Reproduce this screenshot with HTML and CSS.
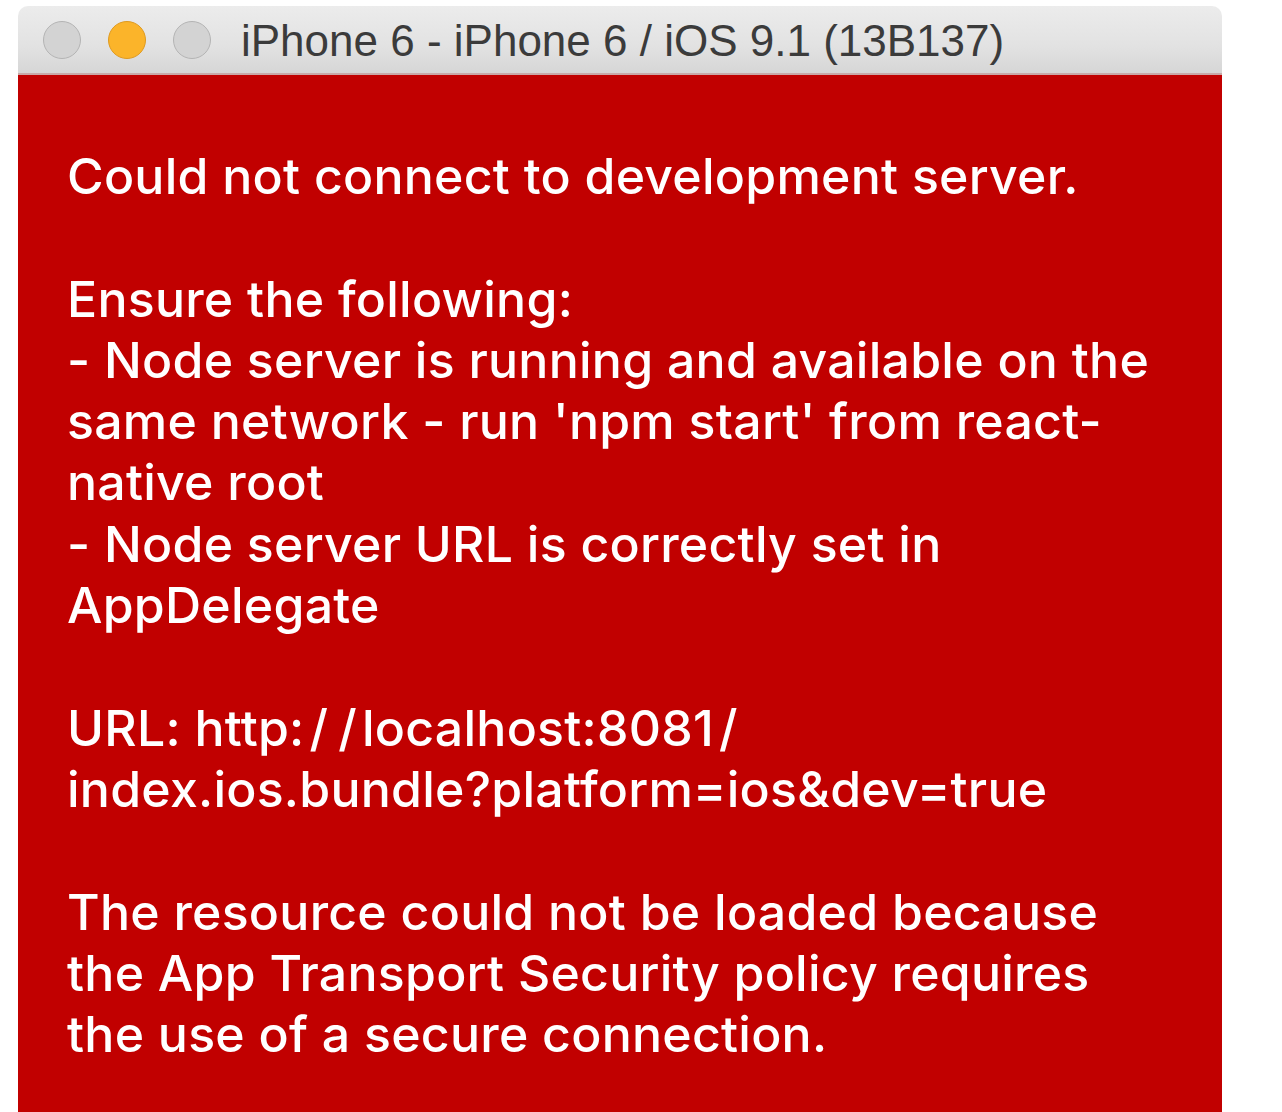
FILE: index.html
```html
<!DOCTYPE html>
<html>
<head>
<meta charset="utf-8">
<link rel="stylesheet" href="styles.css">
</head>
<body>
<div class="window">
  <div class="titlebar">
    <div class="lights">
      <span class="light gray"></span>
      <span class="light yellow"></span>
      <span class="light gray"></span>
    </div>
    <div class="title">iPhone 6 - iPhone 6 / iOS 9.1 (13B137)</div>
  </div>
  <div class="screen">
    <p class="msg">Could not connect to development server.</p>
    <p class="msg">Ensure the following:<br>- Node server is running and available on the<br>same network - run 'npm start' from react-<br>native root<br>- Node server URL is correctly set in<br>AppDelegate</p>
    <p class="msg">URL: http:<span class="sl">/</span><span class="sl">/</span>localhost:8081<span class="sl">/</span><br>index.ios.bundle?platform=ios&amp;dev=true</p>
    <p class="msg">The resource could not be loaded because<br>the App Transport Security policy requires<br>the use of a secure connection.</p>
  </div>
</div>
</body>
</html>
```
FILE: styles.css
```css
html, body {
  margin: 0;
  padding: 0;
  background: #ffffff;
}
body {
  height: 1112px;
  overflow: hidden;
}
.window {
  margin: 6px 0 0 18px;
  width: 1204px;
  display: flex;
  flex-direction: column;
}
.titlebar {
  height: 69px;
  box-sizing: border-box;
  border-radius: 10px 10px 0 0;
  background: linear-gradient(#ececec, #e2e2e2 60%, #d6d6d6);
  border-bottom: 2px solid #c9a9a9;
  display: flex;
  align-items: center;
  padding-left: 25px;
}
.lights {
  display: flex;
  gap: 27px;
}
.light {
  width: 38px;
  height: 38px;
  border-radius: 50%;
  box-sizing: border-box;
}
.light.gray {
  background: #d3d3d3;
  border: 1.5px solid #b4b4b4;
}
.light.yellow {
  background: #fbb42a;
  border: 1.5px solid #df9a1f;
}
.title {
  margin-left: 30px;
  font-family: "Liberation Sans", Arial, sans-serif;
  font-size: 44px;
  color: #3b3b3b;
  margin-top: 2px;
}
.screen {
  background: #c10000;
  height: 1037px;
  padding: 71px 0 0 49px;
  box-sizing: border-box;
  overflow: hidden;
}
.msg {
  margin: 0 0 61.3px 0;
  font-family: Inter, "Open Sans", sans-serif;
  font-weight: 500;
  font-size: 50px;
  line-height: 61.3px;
  letter-spacing: 0.25px;
  color: #ffffff;
  white-space: nowrap;
}
.sl {
  margin: 0 5px;
}
```
